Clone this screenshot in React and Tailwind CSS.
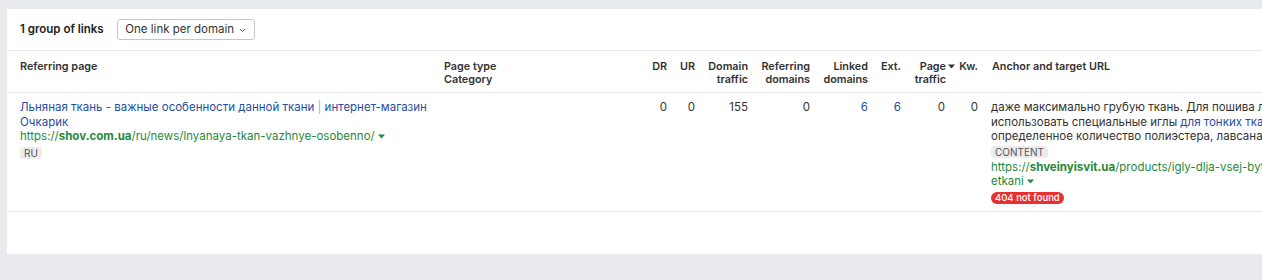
const font = { fontFamily: 'Inter, "Noto Sans", sans-serif' }

function Caret({ className = '' }) {
  return (
    <svg width="7" height="5" viewBox="0 0 7 5" className={`inline-block ${className}`}>
      <path d="M0 0.5 L7 0.5 L3.5 4.5 Z" fill="currentColor" />
    </svg>
  )
}

const headers = [
  { label: ['DR'], w: 'w-[30px]' },
  { label: ['UR'], w: 'w-[28px]' },
  { label: ['Domain', 'traffic'], w: 'w-[53px]' },
  { label: ['Referring', 'domains'], w: 'w-[62px]' },
  { label: ['Linked', 'domains'], w: 'w-[58px]' },
  { label: ['Ext.'], w: 'w-[33px]' },
]

const values = [
  { v: '0', blue: false },
  { v: '0', blue: false },
  { v: '155', blue: false },
  { v: '0', blue: false },
  { v: '6', blue: true },
  { v: '6', blue: true },
]

export default function App() {
  return (
    <div className="w-[1262px] h-[280px] overflow-hidden bg-[#e9eaed] pt-[9px] pl-[7px]" style={font}>
      <div className="w-[1300px] h-[245px] bg-white text-[#333]">
        <div className="h-[42px] flex items-center pl-[13px] gap-[13px] border-b border-[#e8e8e8]">
          <span className="text-[11.5px] font-semibold text-[#222]">1 group of links</span>
          <button className="h-[21px] w-[138px] border border-[#c6c6c6] rounded-[3px] text-[11.5px] text-[#333] flex items-center justify-center gap-[5px]">
            One link per domain
            <svg width="7" height="5" viewBox="0 0 7 5" className="mt-[1px]">
              <path d="M1 1 L3.5 3.5 L6 1" stroke="#555" strokeWidth="1" fill="none" />
            </svg>
          </button>
        </div>

        <div className="flex h-[42px] border-b border-[#e8e8e8] pt-[9px] text-[10.8px] font-semibold text-[#333] leading-[13px]">
          <div className="w-[431px] shrink-0 pl-[13px]">Referring page</div>
          <div className="w-[199px] shrink-0 pl-[6px]">
            <div>Page type</div>
            <div>Category</div>
          </div>
          {headers.map((h) => (
            <div key={h.label.join()} className={`${h.w} shrink-0 text-right`}>
              {h.label.map((l) => (
                <div key={l}>{l}</div>
              ))}
            </div>
          ))}
          <div className="w-[52px] shrink-0 flex justify-end pr-[7px]">
            <div className="relative text-right">
              <div>Page</div>
              <div>traffic</div>
              <Caret className="absolute top-[4px] -right-[9px] text-[#333]" />
            </div>
          </div>
          <div className="w-[25px] shrink-0 text-right">Kw.</div>
          <div className="pl-[14px] whitespace-nowrap">Anchor and target URL</div>
        </div>

        <div className="flex h-[119px] border-b border-[#e8e8e8] pt-[7px] text-[11.5px] leading-[14.5px]">
          <div className="w-[431px] shrink-0 pl-[13px]">
            <div className="text-[#1f4ea3]">
              Льняная ткань - важные особенности данной ткани <span className="text-[#7fb2e5]">|</span> интернет-магазин Очкарик
            </div>
            <div className="text-[#1f8a3b] whitespace-nowrap">
              https://<span className="font-bold">shov.com.ua</span>/ru/news/lnyanaya-tkan-vazhnye-osobenno/{' '}
              <Caret className="text-[#1f8a3b] align-middle" />
            </div>
            <div className="h-[16px] mt-[1px] flex items-center">
              <span className="bg-[#ececec] text-[#555] text-[10px] leading-[12px] px-[4px] rounded-[3px]">RU</span>
            </div>
          </div>
          <div className="w-[199px] shrink-0" />
          {values.map((c, i) => (
            <div key={i} className={`${headers[i].w} shrink-0 text-right ${c.blue ? 'text-[#1f4ea3]' : 'text-[#333]'}`}>
              {c.v}
            </div>
          ))}
          <div className="w-[52px] shrink-0 text-right pr-[8px]">0</div>
          <div className="w-[25px] shrink-0 text-right">0</div>
          <div className="pl-[13px] whitespace-nowrap">
            <div>даже максимально грубую ткань. Для пошива льняных изделий</div>
            <div>
              использовать специальные иглы <span className="text-[#1f4ea3]">для тонких тканей</span>, а также
            </div>
            <div>определенное количество полиэстера, лавсана и</div>
            <div className="h-[16px] flex items-center">
              <span className="bg-[#ececec] text-[#555] text-[10px] leading-[12px] px-[4px] rounded-[3px]">CONTENT</span>
            </div>
            <div className="text-[#1f8a3b]">
              https://<span className="font-bold">shveinyisvit.ua</span>/products/igly-dlja-vsej-bytovoj-tehniki
            </div>
            <div className="text-[#1f8a3b]">
              etkani <Caret className="text-[#1f8a3b] align-middle" />
            </div>
            <div className="h-[15px] mt-[2px] flex items-center">
              <span className="bg-[#e8302f] text-white text-[9.5px] font-medium leading-[12px] px-[4px] rounded-full">404 not found</span>
            </div>
          </div>
        </div>
      </div>
    </div>
  )
}
